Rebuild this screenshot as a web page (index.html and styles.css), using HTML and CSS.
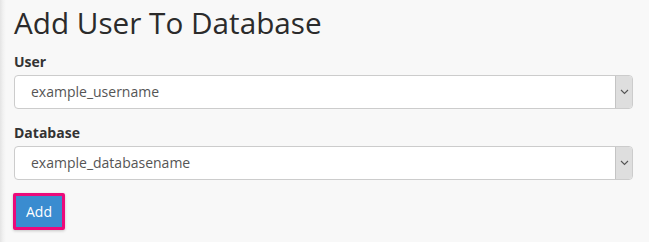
FILE: index.html
```html
<!DOCTYPE html>
<html lang="en">
<head>
    <meta charset="UTF-8">
    <title>Add User To Database</title>
    <link rel="stylesheet" href="styles.css">
</head>
<body>
    <div class="page">
        <h1>Add User To Database</h1>

        <form class="add-form">
            <div class="form-group">
                <label for="user">User</label>
                <div class="select-box">
                    <span class="select-value">example_username</span>
                    <span class="select-arrow">
                        <svg width="9" height="6" viewBox="0 0 9 6"><path d="M1 1l3.5 3.5L8 1" fill="none" stroke="#555" stroke-width="1.1"/></svg>
                    </span>
                </div>
            </div>

            <div class="form-group">
                <label for="database">Database</label>
                <div class="select-box">
                    <span class="select-value">example_databasename</span>
                    <span class="select-arrow">
                        <svg width="9" height="6" viewBox="0 0 9 6"><path d="M1 1l3.5 3.5L8 1" fill="none" stroke="#555" stroke-width="1.1"/></svg>
                    </span>
                </div>
            </div>

            <button type="button" class="btn-add">Add</button>
        </form>
    </div>
</body>
</html>
```

FILE: styles.css
```css
html, body {
    margin: 0;
    height: 100%;
}
body {
    font-family: 'Open Sans', Arial, sans-serif;
    background: #f8f8f8;
    color: #333;
}
.page {
    height: 100%;
    box-sizing: border-box;
    padding: 0 16px 0 14px;
    background: linear-gradient(90deg, #e4e4e4 0, #f1f1f1 3px, #f8f8f8 6px);
}
h1 {
    margin: 0;
    padding-top: 4px;
    font-size: 29.7px;
    font-weight: 400;
    line-height: 38px;
    color: #2b2b2b;
}
.form-group {
    margin-top: 10px;
}
.form-group + .form-group {
    margin-top: 14px;
}
label {
    display: block;
    font-size: 14px;
    font-weight: 700;
    line-height: 20px;
    margin-bottom: 3px;
}
.select-box {
    display: flex;
    height: 34px;
    box-sizing: border-box;
    border: 1px solid #ccc;
    border-radius: 4px;
    background: #fff;
    overflow: hidden;
}
.select-value {
    flex: 1;
    padding-left: 16px;
    font-size: 14px;
    line-height: 32px;
    color: #555;
}
.select-arrow {
    width: 16px;
    display: flex;
    align-items: center;
    justify-content: center;
    background: #dedede;
    border-left: 1px solid #c4c4c4;
}
.btn-add {
    margin: 13px 0 0 -1px;
    padding: 0 10px;
    height: 37px;
    font-family: inherit;
    font-size: 14px;
    color: #fff;
    background: #3a8cd0;
    border: 3px solid #ec0a7a;
    border-radius: 2px;
    box-shadow: 0 1px 3px rgba(0,0,0,0.2);
}
```
